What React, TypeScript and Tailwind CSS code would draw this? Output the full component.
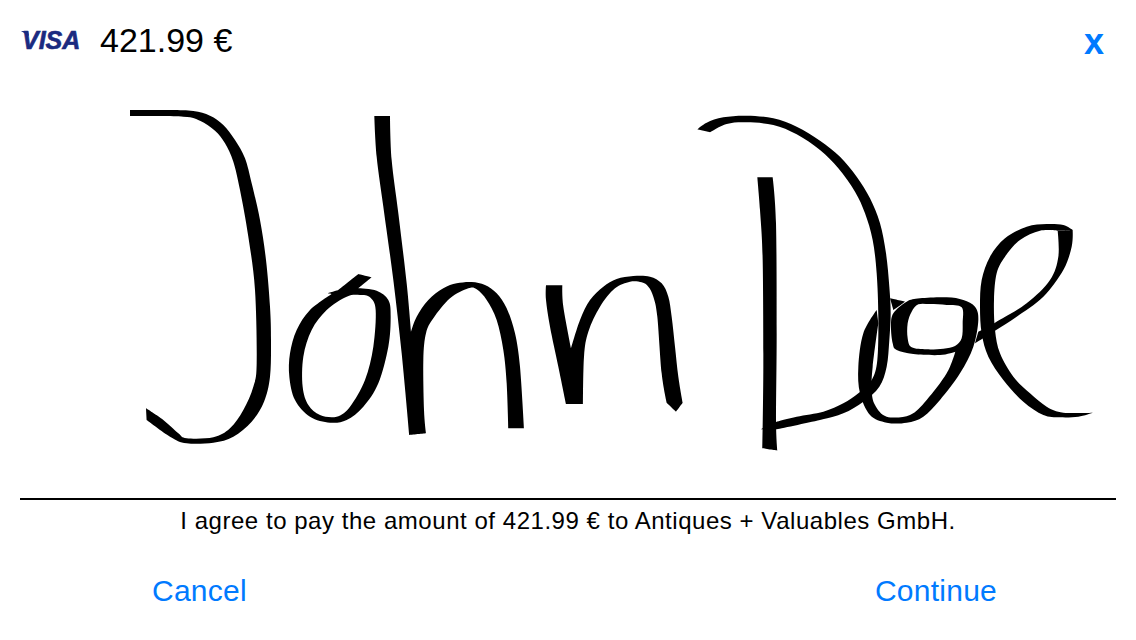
type P = number[];

function smooth(points: P[], ox: number, oy: number): string {
  const pts = points.map((p) => ({ x: ox + p[0] / 3, y: oy + p[1] / 3, c: p[2] === 1 }));
  const n = pts.length;
  const f = (v: number) => v.toFixed(2);
  let d = `M${f(pts[0].x)} ${f(pts[0].y)}`;
  for (let i = 0; i < n; i++) {
    const a = pts[(i - 1 + n) % n];
    const b = pts[i];
    const c = pts[(i + 1) % n];
    const e = pts[(i + 2) % n];
    const c1 = b.c ? b : { x: b.x + (c.x - a.x) / 6, y: b.y + (c.y - a.y) / 6 };
    const c2 = c.c ? c : { x: c.x - (e.x - b.x) / 6, y: c.y - (e.y - b.y) / 6 };
    d += `C${f(c1.x)} ${f(c1.y)} ${f(c2.x)} ${f(c2.y)} ${f(c.x)} ${f(c.y)}`;
  }
  return d + "Z";
}

const J: P[] = [[30,30,1],[150,30],[220,33],[270,47],[310,75],[345,120],[375,175],[395,250],[420,360],[438,480],[450,620],[453,720],[450,830],[432,905],[395,965],[340,1010],[280,1028],[200,1030],[150,1010],[80,960,1],[78,925,1],[130,960],[175,1000],[200,1015],[280,1012],[330,985],[370,930],[400,860],[410,790],[405,570],[385,410],[360,270],[340,185],[315,130],[285,92],[240,62],[190,50],[30,48,1]];
const O1: P[] = [[715,522,1],[755,532,1],[715,565,1],[770,572],[805,600],[812,650],[805,740],[775,850],[730,920],[680,960],[630,968],[570,950],[525,900],[508,830],[510,760],[530,690],[570,630],[635,582,1],[622,580,1],[655,570,1]];
const O1H: P[] = [[720,585],[750,592],[767,630],[760,740],[735,840],[690,920],[650,950],[600,945],[565,915],[548,860],[550,770],[575,690],[620,630],[680,590]];
const H: P[] = [[-77,48,1],[-70,170],[-50,320],[-20,540],[5,760],[28,1005,1],[78,1000,1],[72,930],[70,780],[78,700],[100,655],[150,595],[205,565],[230,568],[260,600],[290,660],[310,750],[320,850],[325,985,1],[372,985,1],[360,800],[345,700],[320,625],[290,580],[255,555],[215,546],[170,550],[130,565],[85,600],[50,650],[33,695,1],[20,550],[-5,340],[-25,180],[-30,48,1]];
const N: P[] = [[438,556,1],[487,556,1],[490,620],[513,745,1],[540,660],[570,600],[610,560],[650,537],[700,528],[750,530],[785,550],[805,590],[815,650],[825,740],[835,830],[848,908,1],[828,935,1],[800,908,1],[785,820],[772,650],[760,590],[745,560],[725,547],[690,545],[645,565],[600,620],[565,695],[552,770],[549,912,1],[498,912,1],[475,800],[450,680],[438,600]];
const DStem: P[] = [[232,232,1],[278,232,1],[288,370],[290,700],[288,960],[292,1052,1],[247,1045,1],[250,800],[248,480],[240,330]];
const DBowl: P[] = [[52,88,1],[80,68],[130,52],[200,47],[280,55],[350,80],[420,122],[480,170],[530,230],[570,295],[600,370],[618,460],[628,560],[632,640],[628,720],[620,800],[598,860],[550,905],[490,940],[420,960],[290,988,1],[243,988,1],[290,965,1],[350,950],[430,935],[490,910],[535,880],[575,840],[592,780],[595,650],[590,520],[578,420],[555,340],[525,275],[475,205],[420,150],[350,103],[280,75],[200,67],[140,72],[90,97,1]];
const Tick: P[] = [[630,595,1],[675,605,1],[640,630,1]];
const OE: P[] = [[590,630,1],[550,700],[535,800],[540,880],[570,945],[620,968],[680,968],[730,950],[780,900],[840,820],[880,740],[895,660],[885,620],[850,600],[800,592],[720,595],[680,605],[640,640],[633,680],[638,730],[650,750],[700,762],[780,765],[826,755,1],[800,820],[740,900],[690,945],[620,950],[585,915],[575,870],[578,800],[595,670,1]];
const OEH: P[] = [[715,613],[695,635],[683,670],[683,715],[695,742],[740,748],[790,746],[825,738],[845,715],[848,670],[845,622],[800,615],[750,612]];
const L1: P[] = [[1238,938,1],[1195,950],[1140,952],[1090,945],[1030,905],[970,840],[925,770],[905,700],[900,620],[905,540],[930,470],[975,415],[1040,380],[1100,372],[1150,375],[1178,390,1],[1133,392,1],[1080,392],[1020,420],[975,470],[950,520],[942,600],[945,690],[960,760],[1000,830],[1050,880],[1100,920],[1150,938]];
const L2: P[] = [[1133,392,1],[1178,390,1],[1175,440],[1150,510],[1090,590],[1010,650],[945,692],[885,730,1],[895,695,1],[945,668],[1040,610],[1110,540],[1135,470]];

const sig = [
  smooth(J, 120, 100),
  smooth(O1, 120, 100) + smooth(O1H, 120, 100),
  smooth(H, 400, 100),
  smooth(N, 400, 100),
  smooth(DStem, 680, 100),
  smooth(DBowl, 680, 100),
  smooth(Tick, 680, 100),
  smooth(OE, 680, 100) + smooth(OEH, 680, 100),
  smooth(L1, 680, 100),
  smooth(L2, 680, 100),
];

function Signature() {
  return (
    <svg viewBox="0 80 1136 418" className="block w-[1136px] h-[418px]">
      {sig.map((d, i) => (
        <path key={i} d={d} fill="#000" fillRule="evenodd" />
      ))}
    </svg>
  );
}

export default function App() {
  return (
    <div className="w-[1136px] h-[640px] bg-white overflow-hidden flex flex-col font-['Liberation_Sans',Arial,sans-serif] text-black">
      <header className="h-[80px] flex items-start justify-between pl-[22px] pr-[31px]">
        <div className="flex items-center h-[40px] mt-[20px]">
          <span className="relative w-[58px] text-[25px] leading-none font-bold italic text-[#1a2a80] [-webkit-text-stroke:0.6px_#1a2a80]">
            VISA
            <svg viewBox="0 0 10 6" className="absolute left-[-1px] top-[3px] w-[8px] h-[5px]">
              <path d="M0 0 L9 0 L10 6 Z" fill="#1a2a80" />
            </svg>
          </span>
          <span className="ml-[20px] text-[34px] leading-[40px]">421.99 €</span>
        </div>
        <button className="mt-[22px] mr-[1px] text-[36px] leading-[40px] font-bold text-[#007aff]">x</button>
      </header>
      <Signature />
      <div className="mx-[20px] h-[2px] bg-black" />
      <p className="mt-[8px] text-center text-[24px] leading-[26px] tracking-[0.54px]">
        I agree to pay the amount of 421.99 € to Antiques + Valuables GmbH.
      </p>
      <div className="mt-[40px] flex justify-between pl-[152px] pr-[139px] text-[30px] leading-[34px] tracking-[0.25px] text-[#007aff]">
        <button>Cancel</button>
        <button>Continue</button>
      </div>
    </div>
  );
}
